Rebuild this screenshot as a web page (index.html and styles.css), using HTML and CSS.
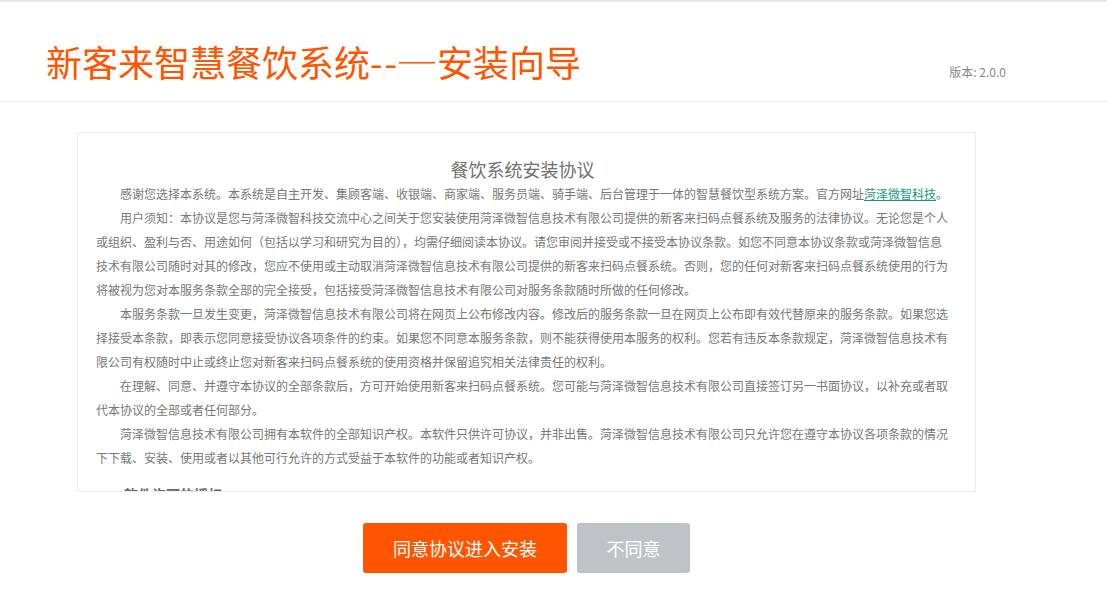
FILE: index.html
```html
<!DOCTYPE html>
<html lang="zh-CN">
<head>
  <meta charset="UTF-8" />
  <meta name="viewport" content="width=device-width, initial-scale=1.0" />
  <title>新客来智慧餐饮系统--—安装向导</title>
  <link rel="stylesheet" href="styles.css">
</head>
<body>
  <div class="header">
    <h1 class="title">新客来智慧餐饮系统<span class="dash">--─</span>安装向导</h1>
    <span class="version">版本: 2.0.0</span>
  </div>

  <div class="main">
    <div class="license">
      <h2 class="license-title">餐饮系统安装协议</h2>
      <p>感谢您选择本系统。本系统是自主开发、集顾客端、收银端、商家端、服务员端、骑手端、后台管理于一体的智慧餐饮型系统方案。官方网址<a href="#">菏泽微智科技</a>。</p>
      <p>用户须知：本协议是您与菏泽微智科技交流中心之间关于您安装使用菏泽微智信息技术有限公司提供的新客来扫码点餐系统及服务的法律协议。无论您是个人或组织、盈利与否、用途如何（包括以学习和研究为目的），均需仔细阅读本协议。请您审阅并接受或不接受本协议条款。如您不同意本协议条款或菏泽微智信息技术有限公司随时对其的修改，您应不使用或主动取消菏泽微智信息技术有限公司提供的新客来扫码点餐系统。否则，您的任何对新客来扫码点餐系统使用的行为将被视为您对本服务条款全部的完全接受，包括接受菏泽微智信息技术有限公司对服务条款随时所做的任何修改。</p>
      <p>本服务条款一旦发生变更，菏泽微智信息技术有限公司将在网页上公布修改内容。修改后的服务条款一旦在网页上公布即有效代替原来的服务条款。如果您选择接受本条款，即表示您同意接受协议各项条件的约束。如果您不同意本服务条款，则不能获得使用本服务的权利。您若有违反本条款规定，菏泽微智信息技术有限公司有权随时中止或终止您对新客来扫码点餐系统的使用资格并保留追究相关法律责任的权利。</p>
      <p>在理解、同意、并遵守本协议的全部条款后，方可开始使用新客来扫码点餐系统。您可能与菏泽微智信息技术有限公司直接签订另一书面协议，以补充或者取代本协议的全部或者任何部分。</p>
      <p>菏泽微智信息技术有限公司拥有本软件的全部知识产权。本软件只供许可协议，并非出售。菏泽微智信息技术有限公司只允许您在遵守本协议各项条款的情况下下载、安装、使用或者以其他可行允许的方式受益于本软件的功能或者知识产权。</p>
      <h3 class="section">一、软件许可的授权</h3>
      <p>本软件仅供个人及企业在授权范围内使用，未经许可不得用于二次开发、转售或其他商业用途。</p>
    </div>

    <div class="actions">
      <button class="button agree">同意协议进入安装</button>
      <button class="button disagree">不同意</button>
    </div>
  </div>
</body>
</html>
```

FILE: styles.css
```css
body {
  margin: 0;
  background-color: #fff;
  font-family: "Noto Sans CJK SC", "Noto Sans", sans-serif;
  border-top: 2px solid #e6e6e6;
}

.header {
  display: flex;
  justify-content: space-between;
  align-items: center;
  height: 81px;
  padding: 18px 101px 0 46px;
  border-bottom: 1px solid #ececec;
}

.title {
  margin: 0;
  font-size: 36px;
  font-weight: normal;
  line-height: 40px;
  color: #ff5400;
}

.title .dash {
  letter-spacing: 2px;
}

.version {
  padding-top: 22px;
  font-size: 12px;
  color: #888;
}

.main {
  width: 899px;
  margin: 30px 0 0 77px;
}

.license {
  box-sizing: border-box;
  height: 360px;
  padding: 23px 26px 0 18px;
  border: 1px solid #ececec;
  overflow-y: auto;
  scrollbar-width: none;
  color: #777;
}

.license-title {
  margin: 0;
  font-size: 18px;
  font-weight: normal;
  line-height: 26px;
  text-align: center;
  color: #707070;
}

.license p {
  margin: 0;
  font-size: 12px;
  line-height: 24px;
  text-indent: 2em;
}

.license a {
  color: #149a7e;
}

.section {
  margin: 12px 0 0;
  font-size: 14px;
  line-height: 24px;
  color: #666;
}

.actions {
  display: flex;
  justify-content: center;
  gap: 10px;
  margin-top: 31px;
}

.button {
  height: 50px;
  padding: 0;
  border: none;
  border-radius: 3px;
  font-family: inherit;
  font-size: 18px;
  color: #fff;
  cursor: pointer;
}

.agree {
  width: 204px;
  background-color: #ff5500;
}

.disagree {
  width: 113px;
  background-color: #bfc3c6;
}
```
